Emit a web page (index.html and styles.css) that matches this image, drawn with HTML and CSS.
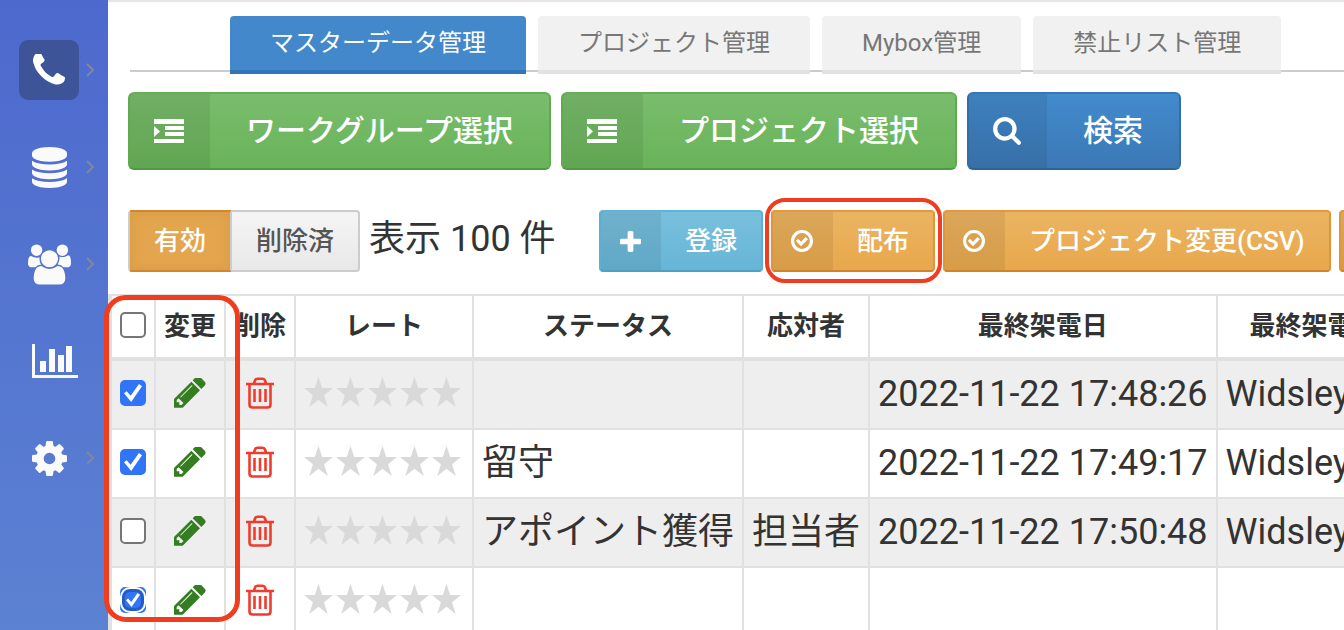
FILE: index.html
```html
<!DOCTYPE html>
<html lang="ja">
<head>
    <meta charset="UTF-8">
    <meta name="viewport" content="width=device-width, initial-scale=1.0">
    <title>マスターデータ管理</title>
    <link rel="stylesheet" href="styles.css">
</head>
<body>
    <!-- shared icons -->
    <svg class="sprite" aria-hidden="true">
        <symbol id="i-indent" viewBox="0 0 30 24">
            <path d="M0 0h30v5H0zM11 7h19v4H11zM11 13h19v4H11zM0 20h30v4H0zM0 7l6 5.500-6 5.500z"/>
        </symbol>
        <symbol id="i-search" viewBox="64 128 1664 1664">
            <path d="M1216 832q0-185-131.500-316.500t-316.500-131.500-316.500 131.500-131.500 316.500 131.500 316.500 316.500 131.500 316.500-131.500 131.500-316.500zm512 832q0 52-38 90t-90 38q-54 0-90-38l-343-342q-179 124-399 124-143 0-273.500-55.500t-225-150-150-225-55.500-273.500 55.500-273.500 150-225 225-150 273.500-55.500 273.500 55.500 225 150 150 225 55.500 273.500q0 220-124 399l343 343q37 37 37 90z"/>
        </symbol>
        <symbol id="i-plus" viewBox="192 128 1408 1408">
            <path d="M1600 736v192q0 40-28 68t-68 28h-416v416q0 40-28 68t-68 28h-192q-40 0-68-28t-28-68v-416h-416q-40 0-68-28t-28-68v-192q0-40 28-68t68-28h416v-416q0-40 28-68t68-28h192q40 0 68 28t28 68v416h416q40 0 68 28t28 68z"/>
        </symbol>
        <symbol id="i-check" viewBox="0 0 24 24">
            <circle cx="12" cy="12" r="10.300" fill="none" stroke="currentColor" stroke-width="3.400"/>
            <path d="M5.300 12l2.400-2.400 3.200 3.200 5.100-5.100 2.500 2.400-7.600 7.700z"/>
        </symbol>
        <symbol id="i-pencil" viewBox="128 256 1536 1408">
            <path d="M491 1536l91-91-235-235-91 91v107h128v128h107zm523-928q0-22-22-22-10 0-17 7l-542 542q-7 7-7 17 0 22 22 22 10 0 17-7l542-542q7-7 7-17zm-54-192l416 416-832 832h-416v-416zm683 96q0 53-37 90l-166 166-416-416 166-165q36-38 90-38 53 0 91 38l235 234q37 39 37 91z"/>
        </symbol>
        <symbol id="i-trash" viewBox="0 0 28 32">
            <g fill="none" stroke="currentColor" stroke-width="2.600">
                <path d="M0 7h28M8 6.500l1-3q.6-1.700 2.500-1.700h5q1.900 0 2.500 1.700l1 3M3.500 7v20.500q0 3 3 3h15q3 0 3-3V7"/>
                <path d="M8.500 12v13M14 12v13M19.500 12v13"/>
            </g>
        </symbol>
        <symbol id="i-stars" viewBox="0 0 160 30">
            <g id="star">
                <path d="M14.500 0l3.700 11H29l-8.900 7.200L23.700 30l-9.200-7.200L5.300 30l3.600-11.800L0 11h10.800z"/>
            </g>
            <use href="#star" x="32"/>
            <use href="#star" x="64"/>
            <use href="#star" x="96"/>
            <use href="#star" x="128"/>
        </symbol>
        <symbol id="i-arrow" viewBox="0 0 9 14">
            <path d="M1 1l6 6-6 6" fill="none" stroke="currentColor" stroke-width="2"/>
        </symbol>
    </svg>

    <div class="layout">
        <nav class="sidebar" aria-label="メニュー">
            <a href="#" class="side-item active" aria-label="電話">
                <span class="side-icon"><svg width="32" height="32" viewBox="192 192 1408 1408"><path d="M1600 1240q0 27-10 70.500t-21 68.500q-21 50-122 106-94 51-186 51-27 0-53-3.500t-57.500-12.500-47-14.500-55.500-20.500-49-18q-98-35-175-83-127-79-264-216t-216-264q-48-77-83-175-3-9-18-49t-20.500-55.500-14.500-47-12.500-57.500-3.500-53q0-92 51-186 56-101 106-122 25-11 68.500-21t70.500-10q14 0 21 3 18 6 53 76 11 19 30 54t35 63.500 31 53.500q3 4 17.500 25t21.500 35.500 7 28.500q0 20-28.500 50t-62 55-62 53-28.500 46q0 9 5 22.500t8.500 20.500 14 24 11.500 19q76 137 174 235t235 174q2 1 19 11.500t24 14 20.500 8.500 22.500 5q18 0 46-28.500t53-62 55-62 50-28.500q14 0 28.500 7t35.500 21.500 25 17.500q25 15 53.500 31t63.500 35 54 30q70 35 76 53 3 7 3 21z"/></svg></span>
                <svg class="arrow" width="9" height="14"><use href="#i-arrow"/></svg>
            </a>
            <a href="#" class="side-item" aria-label="データ">
                <span class="side-icon"><svg width="35" height="41" viewBox="128 0 1536 1792"><path d="M896 768q237 0 443-43t325-127v170q0 69-103 128t-280 93.500-385 34.500-385-34.500-280-93.500-103-128v-170q119 84 325 127t443 43zm0 768q237 0 443-43t325-127v170q0 69-103 128t-280 93.500-385 34.500-385-34.500-280-93.500-103-128v-170q119 84 325 127t443 43zm0-384q237 0 443-43t325-127v170q0 69-103 128t-280 93.500-385 34.500-385-34.500-280-93.500-103-128v-170q119 84 325 127t443 43zm0-1152q208 0 385 34.500t280 93.500 103 128v128q0 69-103 128t-280 93.500-385 34.500-385-34.500-280-93.500-103-128v-128q0-69 103-128t280-93.500 385-34.500z"/></svg></span>
                <svg class="arrow" width="9" height="14"><use href="#i-arrow"/></svg>
            </a>
            <a href="#" class="side-item" aria-label="ユーザー">
                <span class="side-icon"><svg width="43" height="41" viewBox="0 0 1920 1792"><path d="M593 896q-162 5-265 128h-134q-82 0-138-40.500t-56-118.500q0-353 124-353 6 0 43.500 21t97.500 42.500 119 21.500q67 0 133-23-5 37-5 66 0 159 81 287zm1071 637q0 120-73 189.500t-194 69.500h-874q-121 0-194-69.500t-73-189.500q0-53 3.500-103.500t14-109 26.500-108.500 43-97.500 62-81 85.500-53.500 111.500-20q10 0 43 21.500t73 48 107 48 135 21.500 135-21.500 107-48 73-48 43-21.500q61 0 111.500 20t85.500 53.500 62 81 43 97.500 26.500 108.500 14 109 3.500 103.500zm-1024-1277q0 106-75 181t-181 75-181-75-75-181 75-181 181-75 181 75 75 181zm704 384q0 159-112.500 271.500t-271.500 112.500-271.500-112.500-112.500-271.500 112.500-271.500 271.500-112.500 271.500 112.500 112.500 271.500zm576 225q0 78-56 118.500t-138 40.500h-134q-103-123-265-128 81-128 81-287 0-29-5-66 66 23 133 23 59 0 119-21.500t97.500-42.500 43.500-21q124 0 124 353zm-128-609q0 106-75 181t-181 75-181-75-75-181 75-181 181-75 181 75 75 181z"/></svg></span>
                <svg class="arrow" width="9" height="14"><use href="#i-arrow"/></svg>
            </a>
            <a href="#" class="side-item" aria-label="レポート">
                <span class="side-icon"><svg class="chart" width="46" height="34" viewBox="0 0 46 34"><path d="M0 0h3v31h43v3H0zM8 17h6v11H8zM17 5h6v23h-6zM26 11h6v17h-6zM34 2h6v26h-6z"/></svg></span>
            </a>
            <a href="#" class="side-item" aria-label="設定">
                <span class="side-icon"><svg width="35" height="35" viewBox="128 128 1536 1536"><path d="M1152 896q0-106-75-181t-181-75-181 75-75 181 75 181 181 75 181-75 75-181zm512-109v222q0 12-8 23t-20 13l-185 28q-19 54-39 91 35 50 107 138 10 12 10 25t-9 23q-27 37-99 108t-94 71q-12 0-26-9l-138-108q-44 23-91 38-16 136-29 186-7 28-36 28h-222q-14 0-24.500-8.500t-11.500-21.500l-28-184q-49-16-90-37l-141 107q-10 9-25 9-14 0-25-11-126-114-165-168-7-10-7-23 0-12 8-23 15-21 51-66.500t54-70.500q-27-50-41-99l-183-27q-13-2-21-12.500t-8-23.500v-222q0-12 8-23t19-13l186-28q14-46 39-92-40-57-107-138-10-12-10-24 0-10 9-23 26-36 98.500-107.500t94.500-71.500q13 0 26 10l138 107q44-23 91-38 16-136 29-186 7-28 36-28h222q14 0 24.500 8.500t11.500 21.500l28 184q49 16 90 37l142-107q9-9 24-9 13 0 25 10 129 119 165 170 7 8 7 22 0 12-8 23-15 21-51 66.500t-54 70.500q26 50 41 98l183 28q13 2 21 12.500t8 23.500z"/></svg></span>
                <svg class="arrow" width="9" height="14"><use href="#i-arrow"/></svg>
            </a>
        </nav>

        <main class="content">
            <nav class="tabs" aria-label="管理">
                <a href="#" class="tab active">マスターデータ管理</a>
                <a href="#" class="tab">プロジェクト管理</a>
                <a href="#" class="tab">Mybox管理</a>
                <a href="#" class="tab">禁止リスト管理</a>
            </nav>

            <div class="toolbar">
                <button type="button" class="btn btn-lg btn-success"><span class="btn-label"><svg width="30" height="24"><use href="#i-indent"/></svg></span><span class="btn-text">ワークグループ選択</span></button>
                <button type="button" class="btn btn-lg btn-success"><span class="btn-label"><svg width="30" height="24"><use href="#i-indent"/></svg></span><span class="btn-text">プロジェクト選択</span></button>
                <button type="button" class="btn btn-lg btn-primary"><span class="btn-label"><svg width="28" height="28"><use href="#i-search"/></svg></span><span class="btn-text">検索</span></button>
            </div>

            <div class="subbar">
                <div class="btn-group">
                    <button type="button" class="toggle on" aria-pressed="true">有効</button>
                    <button type="button" class="toggle" aria-pressed="false">削除済</button>
                </div>
                <span class="count">表示 100 件</span>
                <div class="actions">
                    <button type="button" class="btn btn-info"><span class="btn-label"><svg width="21" height="21"><use href="#i-plus"/></svg></span><span class="btn-text">登録</span></button>
                    <button type="button" class="btn btn-warning marked"><span class="btn-label"><svg width="22" height="22"><use href="#i-check"/></svg></span><span class="btn-text">配布</span></button>
                    <button type="button" class="btn btn-warning"><span class="btn-label"><svg width="22" height="22"><use href="#i-check"/></svg></span><span class="btn-text">プロジェクト変更(CSV)</span></button>
                    <button type="button" class="btn btn-warning" aria-label="その他"><span class="btn-label"><svg width="22" height="22"><use href="#i-check"/></svg></span></button>
                </div>
            </div>

            <div class="table-wrap">
                <table class="list">
                    <thead>
                        <tr>
                            <th><input type="checkbox" class="check" aria-label="すべて選択"></th>
                            <th>変更</th>
                            <th>削除</th>
                            <th>レート</th>
                            <th>ステータス</th>
                            <th>応対者</th>
                            <th>最終架電日</th>
                            <th class="last">最終架電者</th>
                        </tr>
                    </thead>
                    <tbody>
                        <tr>
                            <td><input type="checkbox" class="check" aria-label="選択" checked></td>
                            <td><a href="#" class="edit" aria-label="変更"><svg width="32" height="30"><use href="#i-pencil"/></svg></a></td>
                            <td><a href="#" class="delete" aria-label="削除"><svg width="28" height="32"><use href="#i-trash"/></svg></a></td>
                            <td><svg class="stars" width="160" height="30" role="img" aria-label="レート 0"><use href="#i-stars"/></svg></td>
                            <td></td>
                            <td></td>
                            <td>2022-11-22 17:48:26</td>
                            <td>Widsley</td>
                        </tr>
                        <tr>
                            <td><input type="checkbox" class="check" aria-label="選択" checked></td>
                            <td><a href="#" class="edit" aria-label="変更"><svg width="32" height="30"><use href="#i-pencil"/></svg></a></td>
                            <td><a href="#" class="delete" aria-label="削除"><svg width="28" height="32"><use href="#i-trash"/></svg></a></td>
                            <td><svg class="stars" width="160" height="30" role="img" aria-label="レート 0"><use href="#i-stars"/></svg></td>
                            <td>留守</td>
                            <td></td>
                            <td>2022-11-22 17:49:17</td>
                            <td>Widsley</td>
                        </tr>
                        <tr>
                            <td><input type="checkbox" class="check" aria-label="選択"></td>
                            <td><a href="#" class="edit" aria-label="変更"><svg width="32" height="30"><use href="#i-pencil"/></svg></a></td>
                            <td><a href="#" class="delete" aria-label="削除"><svg width="28" height="32"><use href="#i-trash"/></svg></a></td>
                            <td><svg class="stars" width="160" height="30" role="img" aria-label="レート 0"><use href="#i-stars"/></svg></td>
                            <td>アポイント獲得</td>
                            <td>担当者</td>
                            <td>2022-11-22 17:50:48</td>
                            <td>Widsley</td>
                        </tr>
                        <tr>
                            <td><input type="checkbox" class="check focused" aria-label="選択" checked></td>
                            <td><a href="#" class="edit" aria-label="変更"><svg width="32" height="30"><use href="#i-pencil"/></svg></a></td>
                            <td><a href="#" class="delete" aria-label="削除"><svg width="28" height="32"><use href="#i-trash"/></svg></a></td>
                            <td><svg class="stars" width="160" height="30" role="img" aria-label="レート 0"><use href="#i-stars"/></svg></td>
                            <td></td>
                            <td></td>
                            <td></td>
                            <td></td>
                        </tr>
                    </tbody>
                </table>
                <div class="marker"></div>
            </div>
        </main>
    </div>
</body>
</html>
```
FILE: styles.css
```css
* {
    box-sizing: border-box;
}
body {
    margin: 0;
    overflow: hidden;
    background: #fff;
    color: #333;
    font-family: Roboto, "Noto Sans CJK JP", sans-serif;
    font-size: 36px;
    line-height: 51px;
}
svg {
    display: block;
    flex: none;
    fill: currentColor;
}
a {
    color: inherit;
    text-decoration: none;
}
button {
    font-family: inherit;
    cursor: pointer;
}
.sprite {
    position: absolute;
    width: 0;
    height: 0;
}
.layout {
    display: flex;
    min-height: 100vh;
    border-top: 2px solid rgba(0, 0, 0, 0.1);
    background: linear-gradient(#fafafa, #fff 3px);
}

/* sidebar */
.sidebar {
    display: flex;
    flex: none;
    flex-direction: column;
    gap: 37px;
    width: 108px;
    margin-top: -2px;
    padding: 40px 0 0 19px;
    background: linear-gradient(#4d69cd, #5c82d3);
    color: #fafafa;
}
.side-item {
    display: flex;
    align-items: center;
    gap: 7px;
}
.side-icon {
    display: flex;
    align-items: center;
    justify-content: center;
    width: 60px;
    height: 60px;
    border-radius: 9px;
}
.active .side-icon {
    background: #3e5499;
    color: #fff;
}
.chart {
    margin-left: 12px;
}
.arrow {
    color: #8088a0;
}

/* tabs */
.content {
    flex: 1;
    min-width: 0;
    padding-top: 14px;
}
.tabs {
    display: flex;
    gap: 12px;
    margin-left: 22px;
    padding-left: 100px;
    border-bottom: 2px solid #ccc;
}
.tab {
    flex: none;
    height: 58px;
    margin-bottom: -4px;
    padding: 0 40px;
    border-bottom: 4px solid #e2e2e2;
    border-radius: 4px 4px 0 0;
    background: #f1f1f1;
    color: #777;
    font-size: 24px;
    line-height: 54px;
}
.tab.active {
    border-color: #3276b9;
    background: #4288ca;
    color: #fff;
}

/* buttons */
.toolbar {
    display: flex;
    gap: 10px;
    padding: 20px 20px 0;
}
.btn {
    display: flex;
    flex: none;
    height: 62px;
    padding: 0;
    border: 2px solid;
    border-radius: 4px;
    color: #fff;
    font-size: 26px;
    font-weight: 500;
    line-height: 58px;
}
.btn-label {
    display: flex;
    align-items: center;
    justify-content: center;
    width: 60px;
    padding-right: 2px;
    background: rgba(0, 0, 0, 0.07);
}
.btn-text {
    padding: 0 24px;
}
.btn-lg {
    height: 78px;
    border-radius: 6px;
    font-size: 30px;
    line-height: 74px;
}
.btn-lg .btn-label {
    width: 80px;
}
.btn-lg .btn-text {
    padding: 0 36px;
}
.btn-primary .btn-label {
    width: 78px;
}
.btn-success {
    border-color: #65b054 #5fab4e #509a42;
    background: linear-gradient(#7abd6d, #69b359);
}
.btn-primary {
    border-color: #3877b5 #346ea9 #2e6599;
    background: linear-gradient(#428bcd, #3c78b5);
}
.btn-info {
    border-color: #5fb4d8 #5cb0d4 #4fa0c5;
    background: linear-gradient(#79c0dd, #66b5d7);
}
.btn-warning {
    border-color: #e5993c #e0953b #cf842c;
    background: linear-gradient(#ebb462, #e8a84c);
}
.subbar {
    display: flex;
    padding: 40px 0 0 20px;
}
.btn-group {
    display: flex;
    flex: none;
}
.toggle {
    height: 62px;
    padding: 0 24px;
    border: 2px solid #ccc;
    border-left: 0;
    border-radius: 0 4px 4px 0;
    background: linear-gradient(#f5f5f5, #e8e8e8);
    color: #555;
    font-size: 26px;
    font-weight: 500;
    line-height: 58px;
}
.toggle.on {
    border-color: #cf862d #ccc;
    border-left: 2px solid #ccc;
    border-radius: 4px 0 0 4px;
    background: #e3a54d;
    box-shadow: inset 0 0 12px #d59a47;
    color: #fff;
}
.count {
    flex: none;
    width: 239px;
    padding-left: 9px;
    line-height: 58px;
}
.actions {
    display: flex;
    gap: 8px;
}

/* red frames over the page */
.marked {
    position: relative;
}
.marked::after {
    content: "";
    position: absolute;
    inset: -14px -9px -13px -8px;
    border: 4px solid #f03c1f;
    border-radius: 20px;
}
.marker {
    position: absolute;
    top: 1px;
    left: -4px;
    width: 136px;
    height: 327px;
    border: 5px solid #f03c1f;
    border-radius: 22px;
}

/* list */
.table-wrap {
    position: relative;
    margin-top: 22px;
}
.list {
    border-top: 2px solid #e1e1e1;
    border-spacing: 0;
    white-space: nowrap;
}
.list th,
.list td {
    height: 69px;
    padding: 8px;
    border-right: 2px solid #e1e1e1;
    border-bottom: 2px solid #e1e1e1;
}
.list th {
    height: 65px;
    padding: 0 8px;
    border-bottom-width: 4px;
    font-size: 26px;
}
.list th:first-child,
.list td:first-child {
    border-left: 4px solid #e1e1e1;
}
.list th.last {
    padding: 0 32px;
}
.list tbody tr:nth-child(odd) {
    background: #eee;
}
.edit,
.delete {
    display: flex;
    justify-content: center;
    margin-bottom: 3px;
}
.edit {
    color: #347d20;
}
.delete {
    color: #f03c2e;
}
.stars {
    margin-bottom: 6px;
    color: #d9d9d9;
}
.check {
    display: block;
    position: relative;
    width: 26px;
    height: 26px;
    margin: 0 0 3px;
    border: 2px solid #767676;
    border-radius: 5px;
    background: #fff;
    appearance: none;
}
.check:checked {
    border-color: #3074f8;
    background: #3074f8;
}
.check:checked::after {
    content: "";
    position: absolute;
    inset: 2px;
    background: #fff;
    clip-path: polygon(0 52%, 15% 40%, 37% 65%, 83% 0, 100% 12%, 40% 100%);
}
.check.focused::before {
    content: "";
    position: absolute;
    inset: 0;
    border: 3px solid #255cc4;
    border-radius: 8px;
    outline: 2px solid #fff;
}
.check.focused::after {
    inset: 4px;
}
```
